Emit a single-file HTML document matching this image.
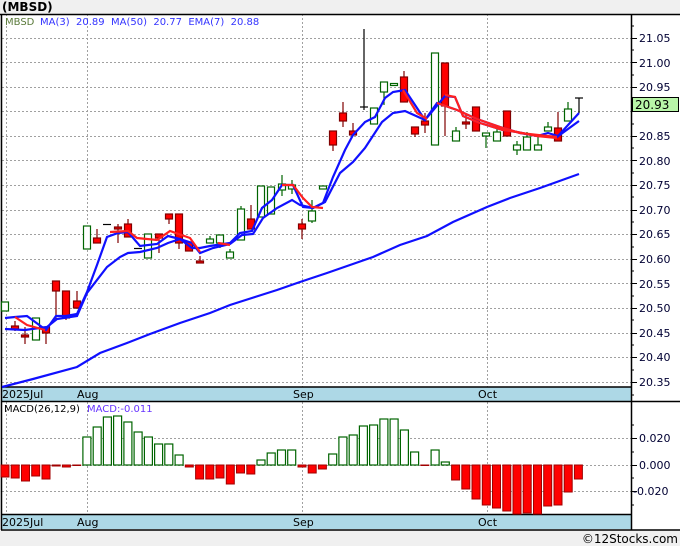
<!DOCTYPE html>
<html><head><meta charset="utf-8"><style>
html,body{margin:0;padding:0;background:#f0f0f0;}
svg{display:block;font-family:"DejaVu Sans","Liberation Sans",sans-serif;}
</style></head><body>
<svg width="680" height="546" viewBox="0 0 680 546" xmlns="http://www.w3.org/2000/svg">
<rect x="0" y="0" width="680" height="546" fill="#f0f0f0"/>
<text x="2" y="11" font-size="12" font-weight="bold" fill="#000">(MBSD)</text>
<rect x="1" y="14" width="679" height="516" fill="#fff"/>
<!-- grids -->
<g stroke="#a0a0a0" stroke-dasharray="2,2" stroke-width="1">
<line x1="2" x2="631" y1="38.5" y2="38.5"/><line x1="2" x2="631" y1="62.5" y2="62.5"/><line x1="2" x2="631" y1="87.5" y2="87.5"/><line x1="2" x2="631" y1="111.5" y2="111.5"/><line x1="2" x2="631" y1="136.5" y2="136.5"/><line x1="2" x2="631" y1="160.5" y2="160.5"/><line x1="2" x2="631" y1="185.5" y2="185.5"/><line x1="2" x2="631" y1="210.5" y2="210.5"/><line x1="2" x2="631" y1="234.5" y2="234.5"/><line x1="2" x2="631" y1="259.5" y2="259.5"/><line x1="2" x2="631" y1="283.5" y2="283.5"/><line x1="2" x2="631" y1="308.5" y2="308.5"/><line x1="2" x2="631" y1="333.5" y2="333.5"/><line x1="2" x2="631" y1="357.5" y2="357.5"/><line x1="2" x2="631" y1="382.5" y2="382.5"/>
<line x1="2" x2="631" y1="438.5" y2="438.5"/><line x1="2" x2="631" y1="465.5" y2="465.5"/><line x1="2" x2="631" y1="491.5" y2="491.5"/>
<line x1="6.5" x2="6.5" y1="14" y2="530"/><line x1="87.5" x2="87.5" y1="14" y2="530"/><line x1="302.5" x2="302.5" y1="14" y2="530"/><line x1="487.5" x2="487.5" y1="14" y2="530"/>
</g>
<!-- bands -->
<rect x="2" y="387" width="629" height="14" fill="#add8e6"/>
<rect x="2" y="515" width="629" height="14" fill="#add8e6"/>
<g font-size="11" fill="#000">
<text x="2" y="398">2025Jul</text><text x="77" y="398">Aug</text><text x="293" y="398">Sep</text><text x="478" y="398">Oct</text>
<text x="2" y="526">2025Jul</text><text x="77" y="526">Aug</text><text x="293" y="526">Sep</text><text x="478" y="526">Oct</text>
</g>
<g stroke="#000" stroke-width="1.5" fill="none">
<line x1="0" x2="680" y1="14.5" y2="14.5"/>
<line x1="1.5" x2="1.5" y1="14" y2="530"/>
<line x1="631.5" x2="631.5" y1="14" y2="530"/>
<line x1="1" x2="631" y1="387" y2="387"/>
<line x1="1" x2="680" y1="401.5" y2="401.5"/>
<line x1="1" x2="631" y1="514.5" y2="514.5"/>
<line x1="1" x2="680" y1="530" y2="530"/>
</g>
<g stroke="#000" stroke-width="1">
<line x1="631" x2="637" y1="38.5" y2="38.5"/><line x1="631" x2="637" y1="62.5" y2="62.5"/><line x1="631" x2="637" y1="87.5" y2="87.5"/><line x1="631" x2="637" y1="111.5" y2="111.5"/><line x1="631" x2="637" y1="136.5" y2="136.5"/><line x1="631" x2="637" y1="160.5" y2="160.5"/><line x1="631" x2="637" y1="185.5" y2="185.5"/><line x1="631" x2="637" y1="210.5" y2="210.5"/><line x1="631" x2="637" y1="234.5" y2="234.5"/><line x1="631" x2="637" y1="259.5" y2="259.5"/><line x1="631" x2="637" y1="283.5" y2="283.5"/><line x1="631" x2="637" y1="308.5" y2="308.5"/><line x1="631" x2="637" y1="333.5" y2="333.5"/><line x1="631" x2="637" y1="357.5" y2="357.5"/><line x1="631" x2="637" y1="382.5" y2="382.5"/>
<line x1="631" x2="634" y1="26" y2="26"/><line x1="631" x2="634" y1="50" y2="50"/><line x1="631" x2="634" y1="75" y2="75"/><line x1="631" x2="634" y1="99" y2="99"/><line x1="631" x2="634" y1="124" y2="124"/><line x1="631" x2="634" y1="148" y2="148"/><line x1="631" x2="634" y1="173" y2="173"/><line x1="631" x2="634" y1="197" y2="197"/><line x1="631" x2="634" y1="222" y2="222"/><line x1="631" x2="634" y1="247" y2="247"/><line x1="631" x2="634" y1="271" y2="271"/><line x1="631" x2="634" y1="296" y2="296"/><line x1="631" x2="634" y1="320" y2="320"/><line x1="631" x2="634" y1="345" y2="345"/><line x1="631" x2="634" y1="370" y2="370"/><line x1="631" x2="634" y1="395" y2="395"/>
<line x1="631" x2="637" y1="438.5" y2="438.5"/><line x1="631" x2="637" y1="465.5" y2="465.5"/><line x1="631" x2="637" y1="491.5" y2="491.5"/>
<line x1="631" x2="634" y1="425" y2="425"/><line x1="631" x2="634" y1="452" y2="452"/><line x1="631" x2="634" y1="478" y2="478"/><line x1="631" x2="634" y1="505" y2="505"/>
</g>
<g font-size="11" fill="#000033">
<text x="639" y="42">21.05</text><text x="639" y="67">21.00</text><text x="639" y="91">20.95</text><text x="639" y="140">20.85</text><text x="639" y="165">20.80</text><text x="639" y="189">20.75</text><text x="639" y="214">20.70</text><text x="639" y="238">20.65</text><text x="639" y="263">20.60</text><text x="639" y="288">20.55</text><text x="639" y="312">20.50</text><text x="639" y="337">20.45</text><text x="639" y="361">20.40</text><text x="639" y="386">20.35</text>
<text x="639" y="442">0.020</text><text x="639" y="469">0.000</text><text x="633" y="495">-0.020</text>
</g>
<rect x="632.5" y="97.5" width="46" height="14" fill="#b8f5a8" stroke="#000"/>
<text x="635" y="109" font-size="12" fill="#000">20.93</text>
<text x="5" y="25" font-size="10" fill="#5a7a3a">MBSD</text>
<text x="40" y="25" font-size="10" fill="#3333ff" xml:space="preserve">MA(3)  20.89  MA(50)  20.77  EMA(7)  20.88</text>
<text x="4" y="412" font-size="10" fill="#000">MACD(26,12,9)</text>
<text x="87" y="412" font-size="10" fill="#6633ff">MACD:-0.011</text>
<!-- MA50 -->
<polyline fill="none" stroke="#1010ff" stroke-width="2.2" points="2,387 33,379 77,367 100,353 127,343 150,334 180,323 210,313 230,305 255,297 277,290 300,282 327,273 350,265 373,257 400,245 427,236 453,222 487,207 510,198 540,188 579,174"/>
<!-- candles -->
<g stroke-width="1.2">
<g stroke="#006400" fill="#fff">
<rect x="1.5" y="302" width="7" height="9"/><rect x="32.5" y="318" width="7" height="22"/><rect x="83.5" y="226" width="7" height="23"/><rect x="144.5" y="234" width="7" height="24"/>
<line x1="210" x2="210" y1="236" y2="239"/><rect x="206.5" y="239" width="7" height="4"/>
<line x1="220" x2="220" y1="243" y2="248"/><rect x="216.5" y="235" width="7" height="8"/>
<line x1="230" x2="230" y1="249" y2="252"/><rect x="226.5" y="252" width="7" height="6"/>
<line x1="241" x2="241" y1="206" y2="209"/><rect x="237.5" y="209" width="7" height="31"/>
<rect x="257.5" y="186" width="7" height="31"/><rect x="267.5" y="187" width="7" height="27"/>
<line x1="282" x2="282" y1="175" y2="196"/><rect x="278.5" y="184" width="7" height="6"/>
<line x1="292" x2="292" y1="180" y2="194"/><rect x="288.5" y="185" width="7" height="4"/>
<line x1="312" x2="312" y1="200" y2="223"/><rect x="308.5" y="211" width="7" height="10"/>
<rect x="319.5" y="186" width="7" height="3"/>
<rect x="370.5" y="108" width="7" height="16"/>
<line x1="384" x2="384" y1="92" y2="105"/><rect x="380.5" y="82" width="7" height="10"/>
<rect x="390.5" y="83.5" width="7" height="2"/>
<rect x="431.5" y="53" width="7" height="92"/>
<line x1="456" x2="456" y1="127" y2="131"/><rect x="452.5" y="131" width="7" height="10"/>
<line x1="486" x2="486" y1="136" y2="148"/><rect x="482.5" y="133" width="7" height="3"/>
<line x1="497" x2="497" y1="126" y2="132"/><rect x="493.5" y="132" width="7" height="9"/>
<line x1="517" x2="517" y1="141" y2="155"/><rect x="513.5" y="145" width="7" height="5"/>
<line x1="527" x2="527" y1="132" y2="137"/><rect x="523.5" y="137" width="7" height="13"/>
<line x1="538" x2="538" y1="137" y2="145"/><rect x="534.5" y="145" width="7" height="5"/>
<line x1="548" x2="548" y1="122" y2="127"/><rect x="544.5" y="127" width="7" height="4"/>
<line x1="568" x2="568" y1="102" y2="109"/><rect x="564.5" y="109" width="7" height="12"/>
</g>
<g stroke="#800000" fill="#ff0000">
<line x1="15" x2="15" y1="321" y2="331"/><rect x="11.5" y="326" width="7" height="3"/>
<line x1="25" x2="25" y1="327" y2="344"/><rect x="21.5" y="335" width="7" height="2"/>
<line x1="46" x2="46" y1="327" y2="344"/><rect x="42.5" y="327" width="7" height="6"/>
<line x1="56" x2="56" y1="281" y2="320"/><rect x="52.5" y="281" width="7" height="10"/>
<line x1="66" x2="66" y1="291" y2="320"/><rect x="62.5" y="291" width="7" height="27"/>
<line x1="77" x2="77" y1="291" y2="309"/><rect x="73.5" y="301" width="7" height="7"/>
<line x1="97" x2="97" y1="229" y2="243"/><rect x="93.5" y="238" width="7" height="5"/>
<line x1="118" x2="118" y1="224" y2="243"/><rect x="114.5" y="227" width="7" height="2"/>
<line x1="128" x2="128" y1="219" y2="237"/><rect x="124.5" y="224" width="7" height="13"/>
<line x1="159" x2="159" y1="234" y2="253"/><rect x="155.5" y="234" width="7" height="4"/>
<line x1="169" x2="169" y1="214" y2="224"/><rect x="165.5" y="214" width="7" height="5"/>
<line x1="179" x2="179" y1="214" y2="249"/><rect x="175.5" y="214" width="7" height="29"/>
<rect x="185.5" y="242" width="7" height="9"/>
<line x1="200" x2="200" y1="256" y2="263"/><rect x="196.5" y="261" width="7" height="2"/>
<line x1="251" x2="251" y1="205" y2="229"/><rect x="247.5" y="219" width="7" height="10"/>
<line x1="302" x2="302" y1="219" y2="239"/><rect x="298.5" y="224" width="7" height="5"/>
<line x1="333" x2="333" y1="131" y2="151"/><rect x="329.5" y="131" width="7" height="14"/>
<line x1="343" x2="343" y1="102" y2="127"/><rect x="339.5" y="113" width="7" height="8"/>
<line x1="353" x2="353" y1="123" y2="135"/><rect x="349.5" y="131" width="7" height="4"/>
<line x1="404" x2="404" y1="71" y2="102"/><rect x="400.5" y="77" width="7" height="25"/>
<line x1="415" x2="415" y1="127" y2="137"/><rect x="411.5" y="127" width="7" height="7"/>
<line x1="425" x2="425" y1="113" y2="133"/><rect x="421.5" y="121" width="7" height="4"/>
<line x1="445" x2="445" y1="63" y2="136"/><rect x="441.5" y="63" width="7" height="43"/>
<line x1="466" x2="466" y1="114" y2="129"/><rect x="462.5" y="122" width="7" height="2"/>
<rect x="472.5" y="107" width="7" height="24"/>
<rect x="503.5" y="111" width="7" height="25"/>
<line x1="558" x2="558" y1="112" y2="141"/><rect x="554.5" y="128" width="7" height="13"/>
</g>
<g stroke="#000" fill="none">
<line x1="103" x2="111" y1="224.5" y2="224.5"/><line x1="134" x2="142" y1="248.5" y2="248.5"/>
<line x1="364" x2="364" y1="29" y2="110"/><line x1="360" x2="368" y1="107" y2="107"/>
<line x1="579" x2="579" y1="98" y2="113"/><line x1="575" x2="583" y1="98" y2="98"/>
</g>
</g>
<!-- slow blue -->
<polyline fill="none" stroke="#1010ff" stroke-width="2.2" points="5,329 25,330 47,327 57,319 77,316 87,293 107,267 120,257 128,253 140,252 157,248 168,243 180,239 192,243 200,253 213,248 230,244 242,235 253,234 263,218 277,208 292,200 300,205 313,208 325,202 340,173 353,162 365,148 382,122 393,113 405,111 425,120 437,103 457,110 477,119 500,127 520,133 538,136 557,137 579,121"/>
<!-- fast blue -->
<polyline fill="none" stroke="#1010ff" stroke-width="2.2" points="5,318 15,317 27,316 46,330 56,316 66,316 77,314 87,292 97,265 107,237 118,233 128,232 140,246 157,244 168,236 180,239 192,248 200,248 210,246 230,243 240,233 252,231 262,208 272,200 282,185 293,185 303,207 313,208 323,203 333,177 345,150 353,135 365,122 375,117 385,98 393,92 405,90 425,120 445,96 455,97 463,116 480,123 503,130 517,132 537,136 548,133 558,136 579,113"/>
<!-- red segments -->
<g fill="none" stroke="#ff2020" stroke-width="2.2">
<polyline points="15,317 27,325 45,330"/>
<polyline points="110,232 128,231 137,238 157,240 170,231 190,238 200,252"/>
<polyline points="218,243 230,245"/>
<polyline points="282,185 293,185 303,198 312,207 323,208"/>
<polyline points="403,90 417,113 427,119"/>
<polyline points="445,95 455,97 463,116 480,123 503,130 517,132 537,136 557,138"/>
<polyline points="437,103 457,110 477,119 500,127 520,133 538,135 557,137"/>
</g>
<!-- MACD bars -->
<g fill="#fff" stroke="#006400" stroke-width="1.2">
<rect x="82.9" y="437" width="8" height="28"/><rect x="93.2" y="427" width="8" height="38"/><rect x="103.4" y="417" width="8" height="48"/><rect x="113.6" y="416" width="8" height="49"/><rect x="123.9" y="422" width="8" height="43"/><rect x="134.1" y="432" width="8" height="33"/><rect x="144.4" y="437" width="8" height="28"/><rect x="154.6" y="444" width="8" height="21"/><rect x="164.8" y="444" width="8" height="21"/><rect x="175.1" y="455" width="8" height="10"/>
<rect x="257" y="460" width="8" height="5"/><rect x="267.2" y="453" width="8" height="12"/><rect x="277.5" y="450" width="8" height="15"/><rect x="287.7" y="450" width="8" height="15"/>
<rect x="328.7" y="454" width="8" height="11"/><rect x="338.9" y="437" width="8" height="28"/><rect x="349.2" y="435" width="8" height="30"/><rect x="359.4" y="426" width="8" height="39"/><rect x="369.6" y="425" width="8" height="40"/><rect x="379.9" y="419" width="8" height="46"/><rect x="390.1" y="419" width="8" height="46"/><rect x="400.4" y="430" width="8" height="35"/><rect x="410.6" y="452" width="8" height="13"/><rect x="431.1" y="450" width="8" height="15"/><rect x="441.3" y="462" width="8" height="3"/>
</g>
<g fill="#ff0000" stroke="#a00000" stroke-width="1">
<rect x="1" y="465" width="8" height="12"/><rect x="11.2" y="465" width="8" height="13"/><rect x="21.5" y="465" width="8" height="16"/><rect x="31.7" y="465" width="8" height="11"/><rect x="42" y="465" width="8" height="14"/><rect x="52.2" y="465" width="8" height="1"/><rect x="62.4" y="465" width="8" height="2"/><rect x="72.7" y="465" width="8" height="0.5"/>
<rect x="185.3" y="465" width="8" height="2"/><rect x="195.6" y="465" width="8" height="14"/><rect x="205.8" y="465" width="8" height="14"/><rect x="216" y="465" width="8" height="13"/><rect x="226.3" y="465" width="8" height="19"/><rect x="236.5" y="465" width="8" height="8"/><rect x="246.8" y="465" width="8" height="9"/>
<rect x="298" y="465" width="8" height="2"/><rect x="308.2" y="465" width="8" height="8"/><rect x="318.4" y="465" width="8" height="4"/><rect x="420.8" y="465" width="8" height="0.5"/>
<rect x="451.6" y="465" width="8" height="15"/><rect x="461.8" y="465" width="8" height="24"/><rect x="472" y="465" width="8" height="34"/><rect x="482.3" y="465" width="8" height="40"/><rect x="492.5" y="465" width="8" height="43"/><rect x="502.8" y="465" width="8" height="46"/><rect x="513" y="465" width="8" height="49"/><rect x="523.2" y="465" width="8" height="48"/><rect x="533.5" y="465" width="8" height="49"/><rect x="543.7" y="465" width="8" height="41"/><rect x="554" y="465" width="8" height="40"/><rect x="564.2" y="465" width="8" height="27"/><rect x="574.4" y="465" width="8" height="14"/>
</g>
<text x="678" y="543" font-size="12" fill="#000" text-anchor="end">©12Stocks.com</text>
</svg>
</body></html>
